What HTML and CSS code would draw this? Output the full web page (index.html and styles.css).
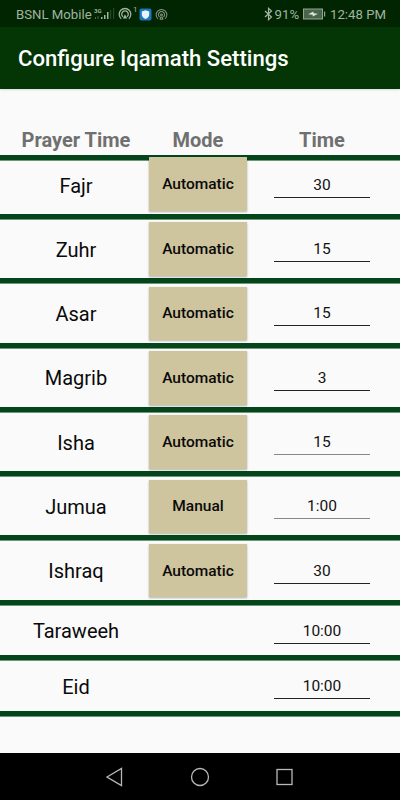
FILE: index.html
```html
<!DOCTYPE html>
<html lang="en">

<head>
    <meta charset="UTF-8">
    <meta name="viewport" content="width=device-width, initial-scale=1.0">
    <title>Configure Iqamath Settings</title>
    <link rel="stylesheet" href="styles.css">
</head>

<body>
    <div class="status-bar">
        <span class="carrier">BSNL Mobile</span>
        <svg class="signal" width="21" height="14" viewBox="0 0 21 14">
            <text class="network" x="0" y="6">3G</text>
            <path d="M1 10h1v2H1zM3.5 9h1v3h-1z" fill="#4b6849" />
            <path d="M7 10h1.5v2H7zM10 8h1.5v4H10zM13 5h1.5v7H13z" fill="#a3b3a2" />
            <path d="M16 3h1.2v9H16zM19 1h1.2v11H19z" fill="#28482a" />
        </svg>
        <svg class="hotspot" width="14" height="14" viewBox="0 0 14 14" fill="none" stroke="#a3b3a2" stroke-width="1.3">
            <path d="M3.2 11.7a5.8 5.8 0 1 1 7.6 0M5 9.8a3.3 3.3 0 1 1 4 0" />
            <path d="M7 7.3l2.2 4.2H4.8z" fill="#a3b3a2" stroke="none" />
        </svg>
        <sup class="count">1</sup>
        <svg class="shield" width="13" height="13" viewBox="0 0 13 13">
            <rect x=".5" y=".5" width="12" height="12" rx="2" fill="#1877bd" />
            <path d="M6.5 2.2l3.7 1.2v3c0 2.2-1.5 3.6-3.7 4.5-2.2-.9-3.7-2.3-3.7-4.5v-3z" fill="#e8f4fb" />
        </svg>
        <svg class="cast" width="13" height="13" viewBox="0 0 14 14" fill="none" stroke="#849582" stroke-width="1.1">
            <path d="M3.2 11.7a5.8 5.8 0 1 1 7.6 0M5 9.8a3.3 3.3 0 1 1 4 0" />
            <circle cx="7" cy="7.5" r="1" />
            <path d="M5.6 12l.5-2h1.8l.5 2z" />
        </svg>
        <svg class="bluetooth" width="9" height="14" viewBox="0 0 9 14" fill="none" stroke="#a3b3a2" stroke-width="1.2">
            <path d="M1 4l6.5 6-3 2.7V1.3l3 2.7L1 10" />
        </svg>
        <span class="percent">91%</span>
        <svg class="battery" width="23" height="12" viewBox="0 0 23 12">
            <rect x=".5" y="1" width="19" height="10" fill="#49644a" stroke="#94a693" />
            <path d="M21 3.5h1.2v5H21z" fill="#94a693" />
            <path d="M5 6.2l5.5-2.6v1.7l4.5.5-5.3 2.6V6.8z" fill="#dce5da" />
        </svg>
        <span class="clock">12:48 PM</span>
    </div>

    <header class="app-bar">
        <h1>Configure Iqamath Settings</h1>
    </header>

    <main class="settings">
        <div class="row heading">
            <span class="title">Prayer Time</span>
            <span class="title">Mode</span>
            <span class="title">Time</span>
        </div>

        <div class="row first">
            <span class="name">Fajr</span>
            <button class="mode">Automatic</button>
            <input class="time" type="text" value="30">
        </div>
        <div class="row">
            <span class="name">Zuhr</span>
            <button class="mode">Automatic</button>
            <input class="time" type="text" value="15">
        </div>
        <div class="row">
            <span class="name">Asar</span>
            <button class="mode">Automatic</button>
            <input class="time" type="text" value="15">
        </div>
        <div class="row">
            <span class="name">Magrib</span>
            <button class="mode">Automatic</button>
            <input class="time" type="text" value="3">
        </div>
        <div class="row">
            <span class="name">Isha</span>
            <button class="mode">Automatic</button>
            <input class="time soft" type="text" value="15">
        </div>
        <div class="row">
            <span class="name">Jumua</span>
            <button class="mode">Manual</button>
            <input class="time soft" type="text" value="1:00">
        </div>
        <div class="row">
            <span class="name">Ishraq</span>
            <button class="mode">Automatic</button>
            <input class="time" type="text" value="30">
        </div>
        <div class="row short">
            <span class="name">Taraweeh</span>
            <span></span>
            <input class="time" type="text" value="10:00">
        </div>
        <div class="row short">
            <span class="name">Eid</span>
            <span></span>
            <input class="time" type="text" value="10:00">
        </div>
    </main>

    <nav class="nav-bar">
        <svg width="18" height="20" viewBox="0 0 18 20">
            <path d="M1 10L15.5 1.5v17z" />
        </svg>
        <svg width="20" height="20" viewBox="0 0 20 20">
            <circle cx="10" cy="10" r="8.5" />
        </svg>
        <svg width="18" height="20" viewBox="0 0 18 20">
            <rect x="1" y="2.5" width="15" height="15" />
        </svg>
    </nav>
</body>

</html>
```
FILE: styles.css
```css
* {
    box-sizing: border-box;
}

body {
    font-family: Roboto, "Liberation Sans", sans-serif;
    background-color: #fafafa;
    margin: 0;
    height: 100vh;
    display: flex;
    flex-direction: column;
    overflow: hidden;
}

.status-bar {
    height: 27px;
    flex-shrink: 0;
    display: flex;
    align-items: center;
    padding: 1px 14px 0 16px;
    background-color: #002500;
    color: #a3b3a2;
    font-size: 13.2px;
    white-space: nowrap;
}

.carrier {
    width: 76px;
}

.signal {
    margin-left: 2px;
}

.network {
    font-size: 6px;
    font-weight: bold;
    fill: #a3b3a2;
}

.hotspot {
    margin-left: 3px;
}

.count {
    width: 5px;
    margin: -8px 1px 0 1px;
    font-size: 8px;
    line-height: 8px;
}

.cast {
    margin-left: 3px;
}

.bluetooth {
    margin-left: auto;
}

.percent {
    margin-left: 2px;
}

.battery {
    margin: 0 4px;
}

.app-bar {
    height: 62px;
    flex-shrink: 0;
    display: flex;
    align-items: center;
    padding-left: 18px;
    background-color: #033604;
    box-shadow: 0 1px 2px rgba(0, 0, 0, 0.12);
}

.app-bar h1 {
    margin: 0;
    color: #fff;
    font-size: 22.1px;
    font-weight: 500;
}

.settings {
    flex-grow: 1;
}

.row {
    display: grid;
    grid-template-columns: 149px 98px 150px;
    align-items: center;
    height: 64.3px;
    padding-top: 2px;
    border-bottom: 5px solid #05451b;
    box-shadow: 0 1px 0 #6f9678;
}

.heading {
    height: 71px;
    padding-top: 35px;
}

.first {
    height: 59px;
    padding: 0 0 3px;
}

.short {
    height: 55.6px;
}

.title {
    text-align: center;
    color: #707070;
    font-size: 20px;
    font-weight: 700;
}

.title:first-child,
.name {
    padding-left: 3px;
}

.name {
    text-align: center;
    color: #0a0a0a;
    font-size: 20px;
}

.mode {
    height: 53.6px;
    margin-top: -1px;
    padding: 0;
    border: none;
    background-color: #cec49d;
    box-shadow: 0 1px 2px rgba(0, 0, 0, 0.3);
    color: #0a0a0a;
    font-family: inherit;
    font-size: 15.5px;
    font-weight: 500;
}

/* the first button sits over the heading line */
.first .mode {
    margin-top: -2.6px;
}

.time {
    justify-self: center;
    width: 96px;
    height: 25px;
    padding: 0;
    border: none;
    border-bottom: 1px solid #222;
    outline: none;
    background: none;
    color: #111;
    font-family: inherit;
    font-size: 15.5px;
    text-align: center;
}

.time.soft {
    border-color: #888;
}

.nav-bar {
    height: 47px;
    flex-shrink: 0;
    display: flex;
    align-items: center;
    justify-content: space-between;
    padding: 0 106px;
    background-color: #000;
}

.nav-bar svg {
    fill: none;
    stroke: #b8b8b8;
    stroke-width: 1.3;
}
```
